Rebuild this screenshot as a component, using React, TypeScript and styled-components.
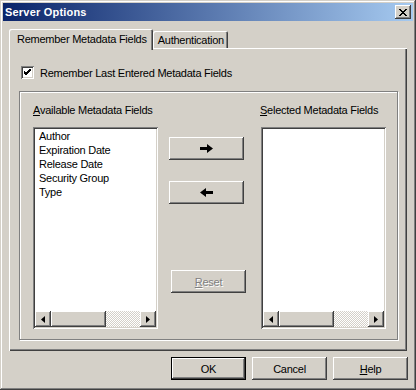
import React from "react";
import styled, { createGlobalStyle } from "styled-components";

const colors = {
  face: "#d4d0c8",
  shadow: "#808080",
  dark: "#404040",
  light: "#ffffff",
  titleStart: "#0a246a",
  titleEnd: "#a6caf0",
  disabled: "#808080",
};

const raised = `
  box-shadow: inset -1px -1px ${colors.dark}, inset 1px 1px ${colors.light},
    inset -2px -2px ${colors.shadow}, inset 2px 2px ${colors.face};
`;

const sunken = `
  box-shadow: inset 1px 1px ${colors.shadow}, inset -1px -1px ${colors.light},
    inset 2px 2px ${colors.dark}, inset -2px -2px ${colors.face};
`;

const GlobalStyle = createGlobalStyle`
  html, body {
    margin: 0;
    padding: 0;
    background: ${colors.face};
  }
  body {
    font-family: "Liberation Sans", Arial, sans-serif;
    font-size: 11px;
    letter-spacing: -0.25px;
    color: #000;
  }
  * {
    box-sizing: border-box;
  }
`;

const Window = styled.div`
  width: 416px;
  height: 390px;
  padding: 3px;
  background: ${colors.face};
  display: flex;
  flex-direction: column;
  box-shadow: inset -1px -1px ${colors.dark}, inset 1px 1px ${colors.face},
    inset -2px -2px ${colors.shadow}, inset 2px 2px ${colors.light};
`;

const TitleBar = styled.div`
  height: 18px;
  display: flex;
  align-items: center;
  padding: 0 2px 0 2px;
  background: linear-gradient(to right, ${colors.titleStart}, ${colors.titleEnd});
  color: #fff;
  font-weight: bold;
  font-size: 11px;
`;

const TitleText = styled.span`
  flex: 1;
  letter-spacing: 0.2px;
`;

const CloseButton = styled.div`
  width: 16px;
  height: 14px;
  background: ${colors.face};
  display: flex;
  align-items: center;
  justify-content: center;
  ${raised}
`;

const TabRow = styled.div`
  display: flex;
  align-items: flex-end;
  height: 19px;
  margin: 8px 0 0 6px;
  position: relative;
  z-index: 1;
`;

const Tab = styled.div<{ $active?: boolean }>`
  height: ${(p) => (p.$active ? 21 : 17)}px;
  margin-bottom: ${(p) => (p.$active ? -2 : 0)}px;
  padding: ${(p) => (p.$active ? "0 6px 2px 8px" : "0 4px 0 5px")};
  display: flex;
  align-items: center;
  background: ${colors.face};
  border-top-left-radius: 2px;
  border-top-right-radius: 2px;
  box-shadow: inset 1px 1px ${colors.light}, inset -1px 0 ${colors.dark},
    inset -2px 0 ${colors.shadow};
`;

const Panel = styled.div`
  margin-left: 6px;
  width: 398px;
  height: 303px;
  padding: 18px 8px 10px 12px;
  box-shadow: inset 1px 1px ${colors.light}, inset -1px -1px ${colors.dark},
    inset -2px -2px ${colors.shadow};
  display: flex;
  flex-direction: column;
`;

const CheckRow = styled.label`
  display: flex;
  align-items: center;
  gap: 6px;
  height: 13px;
`;

const CheckBox = styled.span`
  width: 13px;
  height: 13px;
  background: #fff;
  display: flex;
  align-items: center;
  justify-content: center;
  ${sunken}
`;

const GroupBox = styled.div`
  margin: 12px 0 0 -2px;
  width: 379px;
  height: 249px;
  border: 1px solid ${colors.shadow};
  box-shadow: inset 1px 1px ${colors.light}, 1px 1px ${colors.light};
  padding: 12px 0 0 13px;
  display: flex;
`;

const Column = styled.div<{ $labelShift?: number }>`
  width: 125px;
  display: flex;
  flex-direction: column;
  & > span {
    height: 13px;
    line-height: 13px;
    margin: 0 0 10px ${(p) => p.$labelShift ?? 0}px;
    white-space: nowrap;
  }
`;

const ListBox = styled.div`
  height: 202px;
  background: #fff;
  padding: 2px;
  display: flex;
  flex-direction: column;
  ${sunken}
`;

const Items = styled.ul`
  flex: 1;
  list-style: none;
  margin: 0;
  padding: 0 0 0 4px;
  li {
    height: 14px;
    line-height: 14px;
  }
`;

const HScroll = styled.div`
  height: 16px;
  display: flex;
`;

const ScrollBtn = styled.div`
  width: 16px;
  height: 16px;
  background: ${colors.face};
  display: flex;
  align-items: center;
  justify-content: center;
  ${raised}
`;

const Thumb = styled.div`
  width: 55px;
  height: 16px;
  background: ${colors.face};
  ${raised}
`;

const Track = styled.div`
  flex: 1;
  background: repeating-conic-gradient(#fff 0 25%, ${colors.face} 0 50%) 0 0 / 2px 2px;
`;

const Middle = styled.div`
  width: 78px;
  margin: 0 14px 0 11px;
  padding-top: 33px;
  display: flex;
  flex-direction: column;
`;

const Button = styled.button<{ $default?: boolean; $shift?: number }>`
  width: 75px;
  height: 23px;
  margin: 0 0 0 ${(p) => p.$shift ?? 0}px;
  padding: 0;
  border: ${(p) => (p.$default ? "1px solid #000" : "none")};
  background: ${colors.face};
  font-family: inherit;
  font-size: 11px;
  letter-spacing: inherit;
  color: #000;
  display: flex;
  align-items: center;
  justify-content: center;
  ${raised}
  &:disabled {
    color: ${colors.disabled};
    text-shadow: 1px 1px #fff;
  }
`;

const Footer = styled.div`
  display: flex;
  justify-content: flex-end;
  gap: 6px;
  margin: 6px 5px 0 0;
`;

const ArrowIcon = ({ flip }: { flip?: boolean }) => (
  <svg
    width="15"
    height="9"
    viewBox="0 0 15 9"
    style={flip ? { transform: "scaleX(-1)" } : undefined}
  >
    <polygon points="1,3 8,3 8,0 14,4.5 8,9 8,6 1,6" fill="#000" />
  </svg>
);

const TinyArrow = ({ left }: { left?: boolean }) => (
  <svg width="4" height="7" viewBox="0 0 4 7">
    <polygon points={left ? "4,0 0,3.5 4,7" : "0,0 4,3.5 0,7"} fill="#000" />
  </svg>
);

const ScrollBar = () => (
  <HScroll>
    <ScrollBtn>
      <TinyArrow left />
    </ScrollBtn>
    <Thumb />
    <Track />
    <ScrollBtn>
      <TinyArrow />
    </ScrollBtn>
  </HScroll>
);

const available = [
  "Author",
  "Expiration Date",
  "Release Date",
  "Security Group",
  "Type",
];

export default function App() {
  return (
    <>
      <GlobalStyle />
      <Window>
        <TitleBar>
          <TitleText>Server Options</TitleText>
          <CloseButton>
            <svg width="8" height="7" viewBox="0 0 8 7">
              <path d="M0 0 L7 7 M1 0 L8 7 M7 0 L0 7 M8 0 L1 7" stroke="#000" strokeWidth="1" fill="none" />
            </svg>
          </CloseButton>
        </TitleBar>

        <TabRow>
          <Tab $active>Remember Metadata Fields</Tab>
          <Tab>Authentication</Tab>
        </TabRow>

        <Panel>
          <CheckRow>
            <CheckBox>
              <svg width="7" height="7" viewBox="0 0 7 7">
                <path d="M0 2 L2 4 L7 -1 M0 3 L2 5 L7 0 M0 4 L2 6 L7 1" stroke="#000" strokeWidth="1" fill="none" />
              </svg>
            </CheckBox>
            Remember Last Entered Metadata Fields
          </CheckRow>

          <GroupBox>
            <Column>
              <span>
                <u>A</u>vailable Metadata Fields
              </span>
              <ListBox>
                <Items>
                  {available.map((name) => (
                    <li key={name}>{name}</li>
                  ))}
                </Items>
                <ScrollBar />
              </ListBox>
            </Column>

            <Middle>
              <Button>
                <ArrowIcon />
              </Button>
              <Button style={{ marginTop: 21 }}>
                <ArrowIcon flip />
              </Button>
              <Button disabled $shift={2} style={{ marginTop: 66 }}>
                <u>R</u>eset
              </Button>
            </Middle>

            <Column $labelShift={-1}>
              <span>
                <u>S</u>elected Metadata Fields
              </span>
              <ListBox>
                <Items />
                <ScrollBar />
              </ListBox>
            </Column>
          </GroupBox>
        </Panel>

        <Footer>
          <Button $default>OK</Button>
          <Button>Cancel</Button>
          <Button>
            <u>H</u>elp
          </Button>
        </Footer>
      </Window>
    </>
  );
}
